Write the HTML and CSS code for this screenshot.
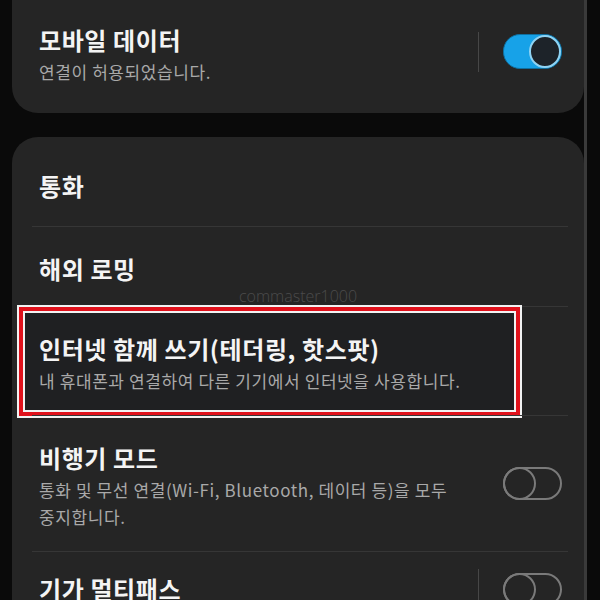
FILE: index.html
```html
<!doctype html>
<html>

<head>
  <title>연결</title>
  <link rel="stylesheet" href="styles.css">
</head>

<body>
  <div class="screen">
    <div class="card card-top">
      <div class="row first">
        <div class="row-text">
          <div class="title">모바일 데이터</div>
          <div class="sub">연결이 허용되었습니다.</div>
        </div>
        <div class="switch-area">
          <div class="bar"></div>
          <div class="toggle on"><div class="knob"></div></div>
        </div>
      </div>
    </div>

    <div class="card">
      <div class="row header first">
        <div class="row-text">
          <div class="title">통화</div>
        </div>
      </div>
      <div class="row">
        <div class="row-text">
          <div class="title">해외 로밍</div>
        </div>
      </div>
      <div class="row marked">
        <div class="mark"></div>
        <div class="row-text">
          <div class="title">인터넷 함께 쓰기(테더링, 핫스팟)</div>
          <div class="sub">내 휴대폰과 연결하여 다른 기기에서 인터넷을 사용합니다.</div>
        </div>
      </div>
      <div class="row">
        <div class="row-text">
          <div class="title">비행기 모드</div>
          <div class="sub">통화 및 무선 연결(Wi-Fi, Bluetooth, 데이터 등)을 모두 중지합니다.</div>
        </div>
        <div class="switch-area">
          <div class="toggle"><div class="knob"></div></div>
        </div>
      </div>
      <div class="row last">
        <div class="row-text">
          <div class="title">기가 멀티패스</div>
        </div>
        <div class="switch-area">
          <div class="bar"></div>
          <div class="toggle"><div class="knob"></div></div>
        </div>
      </div>
    </div>

    <div class="watermark">commaster1000</div>
  </div>
</body>

</html>
```

FILE: styles.css
```css
html, body {
  margin: 0;
  height: 600px;
  overflow: hidden;
  background: #0a0a0a;
}
.screen {
  position: relative;
  margin-left: 12px;
  width: 572px;
  height: 600px;
  border-right: 3px solid #3a3a3a;
  font-family: "Noto Sans CJK KR", "Noto Sans", sans-serif;
}
.card {
  background: #252525;
  border-radius: 26px;
  padding: 0 16px 0 20px;
  margin-top: 24px;
}
.card-top {
  margin-top: 0;
  border-radius: 0 0 26px 26px;
}
.row {
  position: relative;
  display: flex;
  align-items: center;
  padding: 26px 6px 21px 7px;
  border-top: 1px solid #363636;
}
.row.first {
  border-top: none;
}
.card-top .row {
  padding: 24px 6px 28px 7px;
}
.row.header {
  padding: 33px 6px 24px 7px;
}
.row.last {
  padding-top: 17px;
}
.row-text {
  position: relative;
  z-index: 1;
  flex: 1;
  margin-right: 20px;
}
.title {
  color: #f4f4f4;
  font-size: 24px;
  font-weight: 700;
  line-height: 32px;
  letter-spacing: 0.6px;
}
.sub {
  margin-top: 2px;
  color: #a9a9a9;
  font-size: 17px;
  line-height: 27px;
  letter-spacing: 0.6px;
  word-break: keep-all;
}
.switch-area {
  display: flex;
  align-items: center;
  gap: 24px;
  height: 40px;
  margin-bottom: 6px;
}
.row.last .switch-area {
  margin-bottom: 0;
}
.bar {
  width: 1px;
  height: 40px;
  background: #474747;
}
.toggle {
  display: flex;
  box-sizing: border-box;
  width: 59px;
  height: 33px;
  border: 2px solid #7a7a7a;
  border-radius: 17px;
}
.toggle .knob {
  box-sizing: border-box;
  width: 33px;
  height: 33px;
  margin: -2px;
  border: 2px solid #7a7a7a;
  border-radius: 50%;
}
.toggle.on {
  justify-content: flex-end;
  height: 35px;
  background: #17a2e8;
  border: 1px solid #0f6f9f;
}
.toggle.on .knob {
  width: 32px;
  height: 33px;
  margin: 0;
  background: #1d2329;
  border: 2px solid #8fd3f3;
}
.mark {
  position: absolute;
  left: -9px;
  right: 52px;
  top: 4px;
  bottom: 3px;
  background: #1f2022;
  border: 2px solid #f2f2f2;
  box-shadow: 0 0 0 4px #e0111b, 0 0 0 6px #f2f2f2;
}
.watermark {
  position: absolute;
  top: 286px;
  left: 0;
  right: 0;
  text-align: center;
  color: #4b4b4b;
  font-family: "Open Sans", sans-serif;
  font-weight: 300;
  font-size: 16px;
  line-height: 20px;
}
```
